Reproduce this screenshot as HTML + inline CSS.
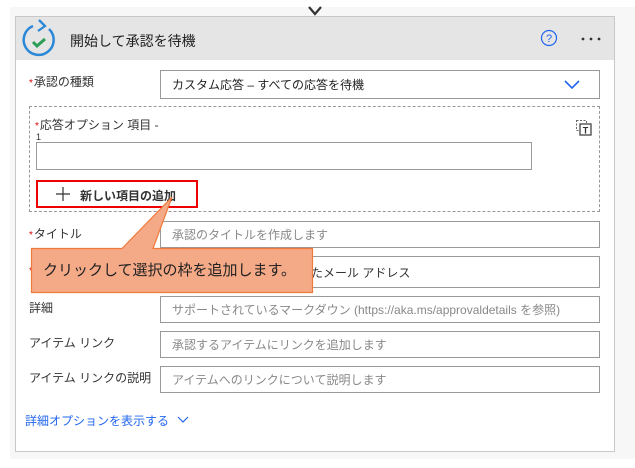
<!DOCTYPE html>
<html><head><meta charset="utf-8"><style>
body{margin:0;width:635px;height:468px;background:#fff;position:relative;overflow:hidden;font-family:"Liberation Sans","Noto Sans CJK JP",sans-serif;}
.a{position:absolute;}
.bg{left:10px;top:7px;width:625px;height:452px;background:#f7f7f7;}
.card{left:15px;top:16px;width:598px;height:434px;background:#fff;border:1px solid #c8c8c8;}
.hdr{left:16px;top:17px;width:598px;height:43px;background:#e5e5e5;}
.lbl{font-size:12px;color:#333;}
.req{color:#d00;font-size:10px;margin-right:1px}
.inp{border:1px solid #999;background:#fff;box-sizing:border-box;font-size:12px;color:#888;padding-left:11px;display:flex;align-items:center;}
</style></head><body>
<div class="a bg"></div>
<div class="a card"></div>
<div class="a hdr"></div>
<svg class="a" style="left:305px;top:3px" width="20" height="14"><path d="M4 4 L10 11 L16 4" stroke="#333" stroke-width="2.2" fill="none"/></svg>
<svg class="a" style="left:18px;top:17px" width="40" height="42"><path d="M15 9 A15 15 0 1 0 31 12" stroke="#2b88d8" stroke-width="2.5" fill="none"/><path d="M21 3 L27 9 L20 14" stroke="#2b88d8" stroke-width="2.3" fill="none"/><path d="M15 25 L19 29 L27 22" stroke="#2e9e57" stroke-width="3" fill="none"/></svg>
<div class="a" style="left:70px;top:31px;font-size:14px;color:#222">開始して承認を待機</div>
<svg class="a" style="left:540px;top:29px" width="18" height="18"><circle cx="9" cy="9" r="7.5" stroke="#2266ee" stroke-width="1.2" fill="none"/><text x="9" y="13" font-size="11" text-anchor="middle" fill="#2266ee" font-family="Liberation Sans">?</text></svg>
<svg class="a" style="left:580px;top:36px" width="24" height="6"><circle cx="3" cy="3" r="1.4" fill="#333"/><circle cx="11" cy="3" r="1.4" fill="#333"/><circle cx="19" cy="3" r="1.4" fill="#333"/></svg>

<div class="a lbl" style="left:29px;top:73px"><span class="req">*</span>承認の種類</div>
<div class="a inp" style="left:160px;top:70px;width:440px;height:29px;color:#222">カスタム応答 – すべての応答を待機</div>
<svg class="a" style="left:563px;top:78px" width="20" height="14"><path d="M2 3 L9 10 L16 3" stroke="#2266ee" stroke-width="1.6" fill="none"/></svg>

<div class="a" style="left:29px;top:106px;width:571px;height:106px;border:1px dashed #999;box-sizing:border-box"></div>
<div class="a lbl" style="left:35px;top:116px"><span class="req">*</span>応答オプション 項目 -</div>
<div class="a" style="left:36px;top:132px;font-size:9px;color:#333">1</div>
<svg class="a" style="left:575px;top:119px" width="18" height="18"><rect x="1.5" y="1.5" width="10" height="10" stroke="#666" stroke-dasharray="2 1.5" fill="none"/><rect x="5" y="5" width="11" height="11" fill="#fff" stroke="#444" stroke-width="1.3"/><text x="10.5" y="14.5" font-size="9" text-anchor="middle" fill="#333" font-family="Liberation Sans" font-weight="bold">T</text></svg>
<div class="a inp" style="left:36px;top:142px;width:496px;height:28px"></div>
<div class="a" style="left:36px;top:180px;width:162px;height:28px;border:2px solid #e00;box-sizing:border-box"></div>
<svg class="a" style="left:55px;top:186px" width="16" height="16"><path d="M8 1 V15 M1 8 H15" stroke="#333" stroke-width="1.2"/></svg>
<div class="a" style="left:80px;top:187px;font-size:12px;font-weight:bold;color:#333">新しい項目の追加</div>

<div class="a lbl" style="left:29px;top:225px"><span class="req">*</span>タイトル</div>
<div class="a inp" style="left:160px;top:221px;width:440px;height:27px">承認のタイトルを作成します</div>
<div class="a lbl" style="left:29px;top:263px"><span class="req">*</span></div>
<div class="a inp" style="left:160px;top:256px;width:440px;height:32px;color:#333;padding-left:150px">たメール アドレス</div>
<div class="a lbl" style="left:29px;top:299px">詳細</div>
<div class="a inp" style="left:160px;top:296px;width:440px;height:27px">サポートされているマークダウン (https://aka.ms/approvaldetails を参照)</div>
<div class="a lbl" style="left:29px;top:334px">アイテム リンク</div>
<div class="a inp" style="left:160px;top:331px;width:440px;height:27px">承認するアイテムにリンクを追加します</div>
<div class="a lbl" style="left:29px;top:369px">アイテム リンクの説明</div>
<div class="a inp" style="left:160px;top:366px;width:440px;height:27px">アイテムへのリンクについて説明します</div>
<div class="a" style="left:25px;top:412px;font-size:12px;color:#2266ee">詳細オプションを表示する</div>
<svg class="a" style="left:176px;top:415px" width="14" height="10"><path d="M2 2 L7 7 L12 2" stroke="#2266ee" stroke-width="1.2" fill="none"/></svg>

<svg class="a" style="left:30px;top:195px" width="290" height="100"><path d="M1.5 53.5 L92 53.5 L142 2 L123 53.5 L282.5 53.5 L282.5 97.5 L1.5 97.5 Z" fill="#f4a987" stroke="#ee7a3c" stroke-width="1.2"/></svg>
<div class="a" style="left:43px;top:259px;font-size:15px;color:#222">クリックして選択の枠を追加します。</div>
</body></html>
